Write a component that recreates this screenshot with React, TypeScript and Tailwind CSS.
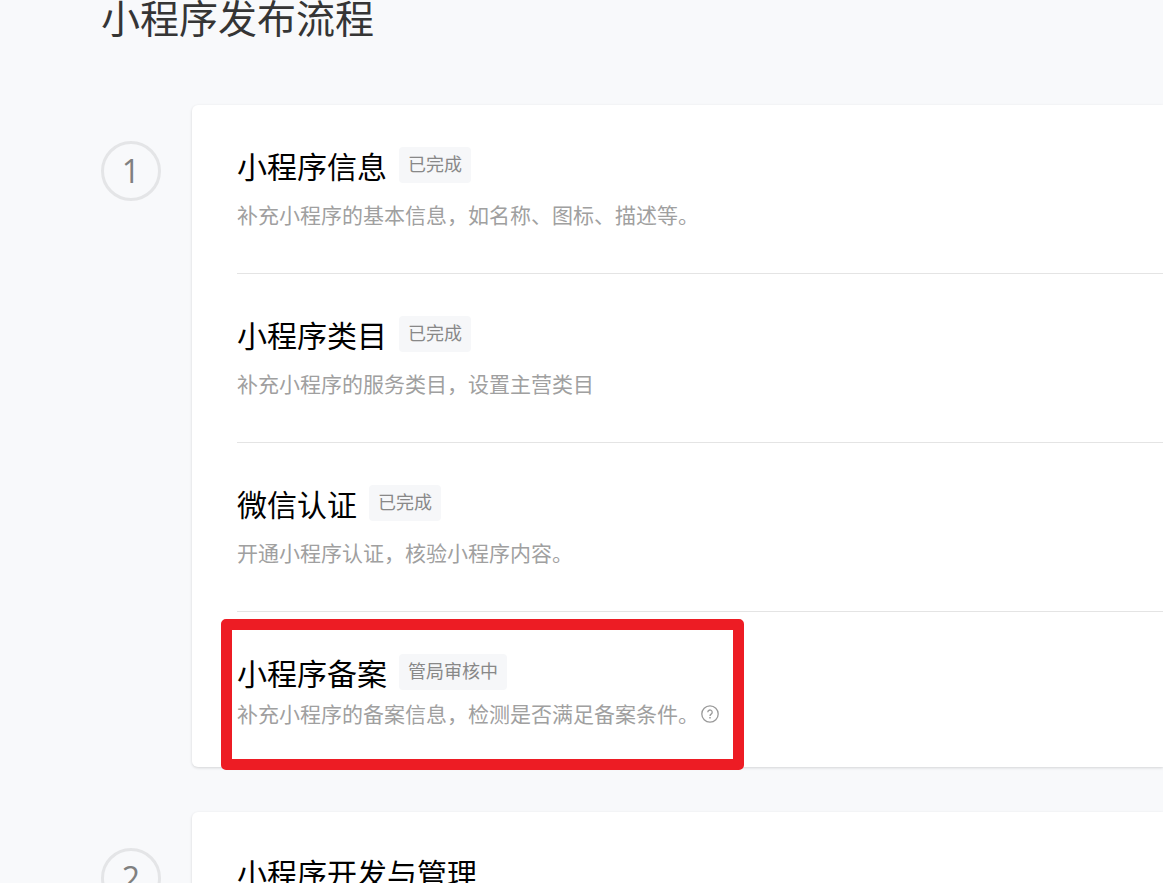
import type { ReactNode } from 'react';

interface StepItem {
  title: string;
  status?: string;
  description?: string;
  help?: boolean;
  highlighted?: boolean;
}

interface Step {
  id: number;
  items: StepItem[];
}

const steps: Step[] = [
  {
    id: 1,
    items: [
      {
        title: '小程序信息',
        status: '已完成',
        description: '补充小程序的基本信息，如名称、图标、描述等。',
      },
      {
        title: '小程序类目',
        status: '已完成',
        description: '补充小程序的服务类目，设置主营类目',
      },
      {
        title: '微信认证',
        status: '已完成',
        description: '开通小程序认证，核验小程序内容。',
      },
      {
        title: '小程序备案',
        status: '管局审核中',
        description: '补充小程序的备案信息，检测是否满足备案条件。',
        help: true,
        highlighted: true,
      },
    ],
  },
  {
    id: 2,
    items: [{ title: '小程序开发与管理' }],
  },
];

function StatusBadge({ children }: { children: ReactNode }) {
  return (
    <span className="h-9 rounded bg-[#f6f7f9] px-[9px] text-[18px] leading-[34px] text-[#888888]">
      {children}
    </span>
  );
}

function HelpButton() {
  return (
    <button type="button" aria-label="帮助" className="ml-0.5 text-[#9a9a9a]">
      <svg
        className="h-[18px] w-[18px]"
        viewBox="0 0 18 18"
        fill="none"
        stroke="currentColor"
        strokeWidth="1.3"
      >
        <circle cx="9" cy="9" r="8.2" />
        <path d="M6.8 7.2a2.2 2.2 0 1 1 3.5 1.8c-.8.6-1.3.9-1.3 1.9" />
        <path d="M9 11.9v1.5" strokeWidth="1.5" />
      </svg>
    </button>
  );
}

function StepRow({ item }: { item: StepItem }) {
  return (
    <li className="border-b border-[#e4e4e4] pt-[42px] pb-[42px] last:border-b-0 last:pb-[37px]">
      <div className="relative w-fit">
        {item.highlighted && (
          <div className="pointer-events-none absolute -top-[35px] -right-[25px] -bottom-10 -left-4 rounded-[5px] border-[11px] border-[#ed1c24]" />
        )}
        <div className="flex items-start gap-3">
          <h2 className="text-[30px] leading-10 text-black">{item.title}</h2>
          {item.status && <StatusBadge>{item.status}</StatusBadge>}
        </div>
        {item.description && (
          <div
            className={
              item.highlighted
                ? 'mt-1 flex items-center'
                : 'mt-3 flex items-center'
            }
          >
            <p className="text-[21px] leading-8 text-[#a0a0a0]">
              {item.description}
            </p>
            {item.help && <HelpButton />}
          </div>
        )}
      </div>
    </li>
  );
}

export default function App() {
  return (
    <main className="h-screen overflow-hidden bg-[#f8f9fb] pl-[101px] font-['Open_Sans','Noto_Sans_CJK_SC',sans-serif]">
      <h1 className="text-[39px] leading-9 text-[#353535]">小程序发布流程</h1>
      <ol className="mt-[69px] space-y-[45px]">
        {steps.map((step) => (
          <li key={step.id} className="flex items-start gap-[31px]">
            <div className="mt-9 h-[60px] w-[60px] shrink-0 rounded-full border-[3px] border-[#e4e5e7] text-center text-[32px] leading-[54px] text-[#808080]">
              {step.id}
            </div>
            <ul className="grow rounded-l-md bg-white pl-[45px] shadow-[0_1px_3px_rgba(0,0,0,0.15)]">
              {step.items.map((item) => (
                <StepRow key={item.title} item={item} />
              ))}
            </ul>
          </li>
        ))}
      </ol>
    </main>
  );
}
